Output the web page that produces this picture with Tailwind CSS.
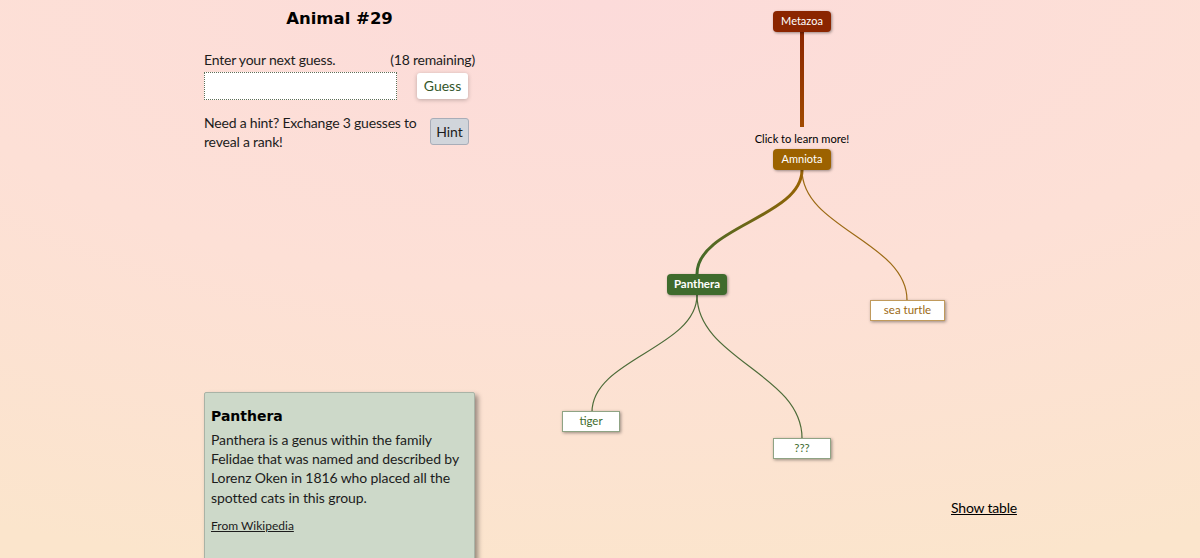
<!DOCTYPE html>
<html lang="en">
<head>
    <meta charset="UTF-8">
    <title>Animal #29</title>
    <script src="https://cdn.jsdelivr.net/npm/@tailwindcss/browser@4"></script>
</head>
<body class="h-[558px] overflow-hidden bg-[radial-gradient(ellipse_115%_105%_at_50%_0%,#fcdbda_0%,#fde0d6_50%,#fbe5cc_100%)] font-['Lato',sans-serif] text-[#1c1c1c]">
    <div class="relative flex h-[558px] overflow-hidden">
        <!-- left column -->
        <div class="ml-[204px] flex w-[271px] flex-col">
            <h1 class="mt-[8px] h-[22px] text-center font-['DejaVu_Sans',sans-serif] text-[16.5px] leading-[22px] font-bold text-black">Animal #29</h1>
            <div class="mt-[20px] flex justify-between text-[14px] leading-[20px] tracking-[-0.2px]">
                <span>Enter your next guess.</span>
                <span>(18 remaining)</span>
            </div>
            <div class="mt-[2px] flex items-start">
                <input type="text" class="h-[28px] w-[193px] border border-dotted border-[#5f6f58] bg-white">
                <button class="mt-[1px] ml-[20px] h-[26px] w-[51px] rounded-[3px] bg-white pb-[1px] text-[14px] text-[#33562a] shadow-[0_1px_4px_rgba(0,0,0,0.25)]">Guess</button>
            </div>
            <div class="mt-[13px] flex items-start justify-between pr-[6px]">
                <p class="w-[225px] text-[14px] leading-[19px] tracking-[-0.2px]">Need a hint? Exchange 3 guesses to reveal a rank!</p>
                <button class="mt-[5px] h-[27px] w-[39px] rounded-[3px] border border-[#a8adb8] bg-[#d1d5db] pb-[1px] text-[14px]">Hint</button>
            </div>
            <div class="mt-[241px] h-[200px] shrink-0 rounded-[2px] border border-[#a9b3a6] bg-[#cdd9c9] px-[6px] pt-[14px] shadow-[3px_3px_5px_rgba(0,0,0,0.4)]">
                <h2 class="font-['DejaVu_Sans',sans-serif] text-[14px] leading-[18px] font-bold text-black">Panthera</h2>
                <p class="mt-[5px] text-[14px] leading-[19.2px] tracking-[-0.1px]">Panthera is a genus within the family Felidae that was named and described by Lorenz Oken in 1816 who placed all the spotted cats in this group.</p>
                <a class="mt-[11px] block text-[12px] leading-[16px] underline">From Wikipedia</a>
            </div>
        </div>

        <!-- tree: nodes sit on a free canvas -->
        <div class="absolute inset-0 left-[500px] w-[700px]">
            <svg class="absolute inset-0" width="700" height="558" viewBox="500 0 700 558" fill="none">
                <defs>
                    <linearGradient id="g1" gradientUnits="userSpaceOnUse" x1="802" y1="30" x2="802" y2="127">
                        <stop offset="0" stop-color="#8b2500"/><stop offset="1" stop-color="#a04a00"/>
                    </linearGradient>
                    <linearGradient id="g2" gradientUnits="userSpaceOnUse" x1="802" y1="170" x2="697" y2="274">
                        <stop offset="0" stop-color="#9c6200"/><stop offset="1" stop-color="#3f6b2d"/>
                    </linearGradient>
                </defs>
                <path d="M802 30V127" stroke="url(#g1)" stroke-width="4"/>
                <path d="M802 170C802 217 697 227 697 274" stroke="url(#g2)" stroke-width="3"/>
                <path d="M802 170C802 228 907 242 907 300" stroke="#9c6a14" stroke-width="1.2"/>
                <path d="M697 295C697 348 592 359 592 412" stroke="#4c6b38" stroke-width="1.2"/>
                <path d="M697 295C697 359 802 374 802 438" stroke="#4c6b38" stroke-width="1.2"/>
            </svg>
            <div class="absolute top-[11px] left-[273px] flex h-[21px] w-[58px] items-center justify-center rounded-[4px] bg-[#8b2500] pb-[1px] text-[11px] text-white shadow-[1px_1px_3px_rgba(0,0,0,0.4)]">Metazoa</div>
            <div class="absolute top-[132px] left-[242px] w-[120px] text-center text-[11.1px] leading-[14px] text-black">Click to learn more!</div>
            <div class="absolute top-[149px] left-[273px] flex h-[21px] w-[58px] items-center justify-center rounded-[4px] bg-[#9c6200] pb-[1px] text-[11px] text-white shadow-[1px_1px_3px_rgba(0,0,0,0.4)]">Amniota</div>
            <div class="absolute top-[274px] left-[167px] flex h-[21px] w-[60px] items-center justify-center rounded-[4px] bg-[#3f6b2d] pb-[2px] text-[11.5px] font-bold text-white shadow-[1px_1px_3px_rgba(0,0,0,0.4)]">Panthera</div>
            <div class="absolute top-[300px] left-[370px] flex h-[21px] w-[75px] items-center justify-center border border-[#c09a5c] bg-white pb-[1px] text-[11.5px] text-[#9c6a14] shadow-[1px_1px_3px_rgba(0,0,0,0.4)]">sea turtle</div>
            <div class="absolute top-[411px] left-[62px] flex h-[21px] w-[58px] items-center justify-center border border-[#8fa384] bg-white pb-[1px] text-[11.5px] text-[#3f6b2d] shadow-[1px_1px_3px_rgba(0,0,0,0.4)]">tiger</div>
            <div class="absolute top-[438px] left-[273px] flex h-[21px] w-[58px] items-center justify-center border border-[#8fa384] bg-white pb-[1px] text-[11.5px] text-[#3f6b2d] shadow-[1px_1px_3px_rgba(0,0,0,0.4)]">???</div>
            <a class="absolute top-[499px] left-[451px] text-[14px] leading-[18px] tracking-[-0.2px] text-black underline">Show table</a>
        </div>
    </div>
</body>
</html>
